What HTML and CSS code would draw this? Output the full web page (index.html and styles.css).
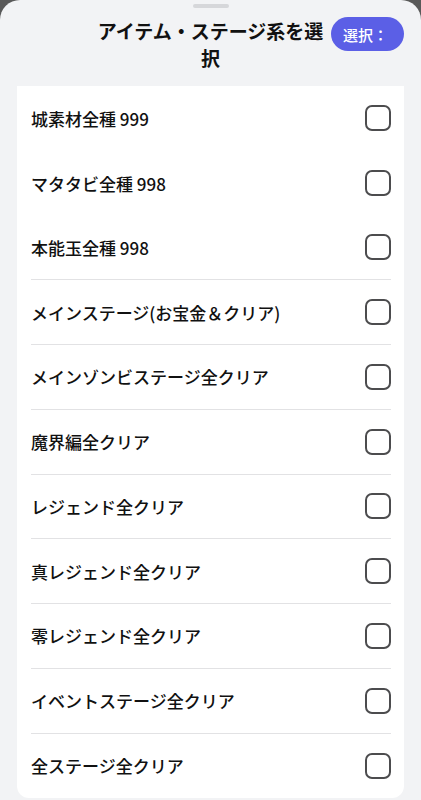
FILE: index.html
```html
<!DOCTYPE html>
<html lang="ja">
<head>
<meta charset="utf-8">
<link rel="stylesheet" href="styles.css">
</head>
<body>
<div class="sheet">
  <div class="handle"></div>
  <div class="header">
    <div class="spacer"></div>
    <h1 class="title">アイテム・ステージ系を選択</h1>
    <button class="select-btn">選択：</button>
  </div>
  <div class="card">
    <div class="row"><span class="label">城素材全種 999</span><span class="check"></span></div>
    <div class="row"><span class="label">マタタビ全種 998</span><span class="check"></span></div>
    <div class="row line"><span class="label">本能玉全種 998</span><span class="check"></span></div>
    <div class="row line"><span class="label">メインステージ(お宝金＆クリア)</span><span class="check"></span></div>
    <div class="row line"><span class="label">メインゾンビステージ全クリア</span><span class="check"></span></div>
    <div class="row line"><span class="label">魔界編全クリア</span><span class="check"></span></div>
    <div class="row line"><span class="label">レジェンド全クリア</span><span class="check"></span></div>
    <div class="row line"><span class="label">真レジェンド全クリア</span><span class="check"></span></div>
    <div class="row line"><span class="label">零レジェンド全クリア</span><span class="check"></span></div>
    <div class="row line"><span class="label">イベントステージ全クリア</span><span class="check"></span></div>
    <div class="row"><span class="label">全ステージ全クリア</span><span class="check"></span></div>
  </div>
</div>
</body>
</html>
```
FILE: styles.css
```css
* { box-sizing: border-box; }
html, body {
  margin: 0;
  padding: 0;
  background: #595959;
  height: 800px;
  overflow: hidden;
}
body {
  font-family: "Noto Sans CJK JP", "Noto Sans", sans-serif;
  color: #111;
}
.sheet {
  background: #f2f3f5;
  border-radius: 20px 20px 0 0;
  height: 800px;
  padding: 4px 17px 0;
  display: flex;
  flex-direction: column;
}
.handle {
  width: 36px;
  height: 4px;
  border-radius: 2px;
  background: #d6d7da;
  align-self: center;
}
.header {
  display: flex;
  align-items: flex-start;
  margin-top: 10px;
  height: 68px;
}
.spacer { width: 73px; flex: none; }
.title {
  flex: 1;
  margin: -1px 0 0;
  font-size: 19px;
  line-height: 27px;
  font-weight: 700;
  text-align: center;
  letter-spacing: 0;
}
.select-btn {
  flex: none;
  width: 73px;
  height: 34px;
  margin-top: -1px;
  border: none;
  border-radius: 17px;
  background: #5b5fe6;
  color: #fff;
  font-family: "Noto Sans CJK JP", sans-serif;
  font-size: 15px;
  font-weight: 500;
  text-align: left;
  padding: 0 0 0 12px;
}
.card {
  background: #fff;
  border-radius: 0 0 12px 12px;
  padding: 0 13px 0 14px;
}
.row {
  height: 64.75px;
  display: flex;
  align-items: center;
  justify-content: space-between;
}
.row.line { border-bottom: 1px solid #e2e2e4; }
.label {
  font-size: 17px;
  font-weight: 500;
  letter-spacing: 0;
}
.check {
  width: 26px;
  height: 26px;
  border: 2px solid #4c4c4e;
  border-radius: 7px;
  flex: none;
}
```
